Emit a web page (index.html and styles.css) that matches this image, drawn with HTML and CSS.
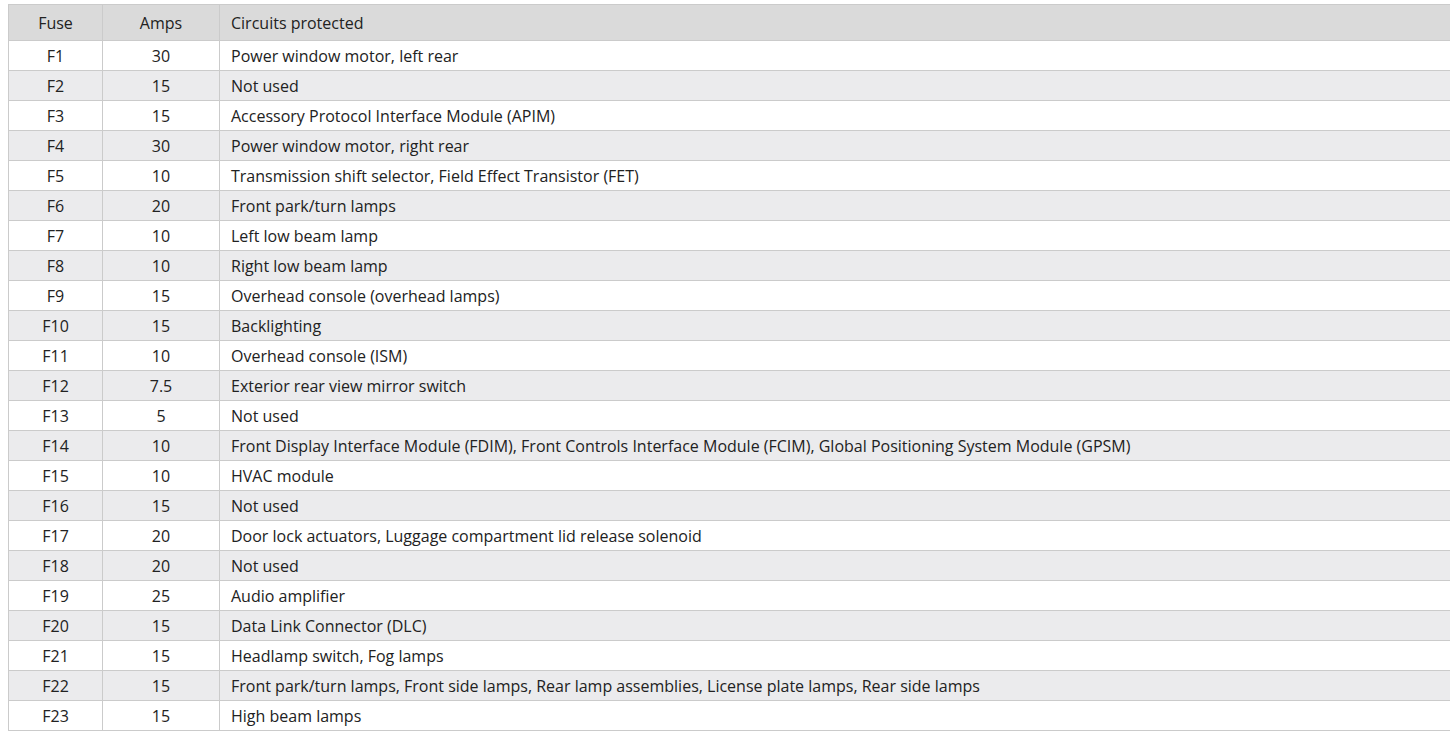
FILE: index.html
```html
<!DOCTYPE html>
<html>
<head>
<meta charset="utf-8">
<link rel="stylesheet" href="styles.css">
</head>
<body>
<table class="fuse-table">
  <colgroup>
    <col class="col-fuse">
    <col class="col-amps">
    <col class="col-desc">
  </colgroup>
  <thead>
    <tr><th class="c-fuse">Fuse</th><th class="c-amps">Amps</th><th class="c-desc">Circuits protected</th></tr>
  </thead>
  <tbody>
    <tr><td class="c-fuse">F1</td><td class="c-amps">30</td><td class="c-desc">Power window motor, left rear</td></tr>
    <tr><td class="c-fuse">F2</td><td class="c-amps">15</td><td class="c-desc">Not used</td></tr>
    <tr><td class="c-fuse">F3</td><td class="c-amps">15</td><td class="c-desc">Accessory Protocol Interface Module (APIM)</td></tr>
    <tr><td class="c-fuse">F4</td><td class="c-amps">30</td><td class="c-desc">Power window motor, right rear</td></tr>
    <tr><td class="c-fuse">F5</td><td class="c-amps">10</td><td class="c-desc">Transmission shift selector, Field Effect Transistor (FET)</td></tr>
    <tr><td class="c-fuse">F6</td><td class="c-amps">20</td><td class="c-desc">Front park/turn lamps</td></tr>
    <tr><td class="c-fuse">F7</td><td class="c-amps">10</td><td class="c-desc">Left low beam lamp</td></tr>
    <tr><td class="c-fuse">F8</td><td class="c-amps">10</td><td class="c-desc">Right low beam lamp</td></tr>
    <tr><td class="c-fuse">F9</td><td class="c-amps">15</td><td class="c-desc">Overhead console (overhead lamps)</td></tr>
    <tr><td class="c-fuse">F10</td><td class="c-amps">15</td><td class="c-desc">Backlighting</td></tr>
    <tr><td class="c-fuse">F11</td><td class="c-amps">10</td><td class="c-desc">Overhead console (ISM)</td></tr>
    <tr><td class="c-fuse">F12</td><td class="c-amps">7.5</td><td class="c-desc">Exterior rear view mirror switch</td></tr>
    <tr><td class="c-fuse">F13</td><td class="c-amps">5</td><td class="c-desc">Not used</td></tr>
    <tr><td class="c-fuse">F14</td><td class="c-amps">10</td><td class="c-desc">Front Display Interface Module (FDIM), Front Controls Interface Module (FCIM), Global Positioning System Module (GPSM)</td></tr>
    <tr><td class="c-fuse">F15</td><td class="c-amps">10</td><td class="c-desc">HVAC module</td></tr>
    <tr><td class="c-fuse">F16</td><td class="c-amps">15</td><td class="c-desc">Not used</td></tr>
    <tr><td class="c-fuse">F17</td><td class="c-amps">20</td><td class="c-desc">Door lock actuators, Luggage compartment lid release solenoid</td></tr>
    <tr><td class="c-fuse">F18</td><td class="c-amps">20</td><td class="c-desc">Not used</td></tr>
    <tr><td class="c-fuse">F19</td><td class="c-amps">25</td><td class="c-desc">Audio amplifier</td></tr>
    <tr><td class="c-fuse">F20</td><td class="c-amps">15</td><td class="c-desc">Data Link Connector (DLC)</td></tr>
    <tr><td class="c-fuse">F21</td><td class="c-amps">15</td><td class="c-desc">Headlamp switch, Fog lamps</td></tr>
    <tr><td class="c-fuse">F22</td><td class="c-amps">15</td><td class="c-desc">Front park/turn lamps, Front side lamps, Rear lamp assemblies, License plate lamps, Rear side lamps</td></tr>
    <tr><td class="c-fuse">F23</td><td class="c-amps">15</td><td class="c-desc">High beam lamps</td></tr>
  </tbody>
</table>
</body>
</html>
```

FILE: styles.css
```css
html, body {
  margin: 0;
  padding: 0;
  background: #ffffff;
  overflow: hidden;
}
body {
  padding: 4px 0 0 8px;
  font-family: "Open Sans", "Liberation Sans", sans-serif;
  font-size: 16px;
  color: #222222;
}
.fuse-table {
  border-collapse: collapse;
  width: 1460px;
  table-layout: fixed;
}
.col-fuse { width: 94px; }
.col-amps { width: 117px; }
.fuse-table th,
.fuse-table td {
  border: 1px solid #cbcbcb;
  padding: 0 11px;
  font-weight: normal;
  line-height: 20px;
  white-space: nowrap;
}
.fuse-table th {
  height: 35px;
  background: #dadada;
}
.fuse-table td {
  height: 29px;
}
.fuse-table tbody tr:nth-child(even) td {
  background: #ebebed;
}
.c-fuse { text-align: center; }
.c-amps { text-align: center; }
.c-desc { text-align: left; }
```
